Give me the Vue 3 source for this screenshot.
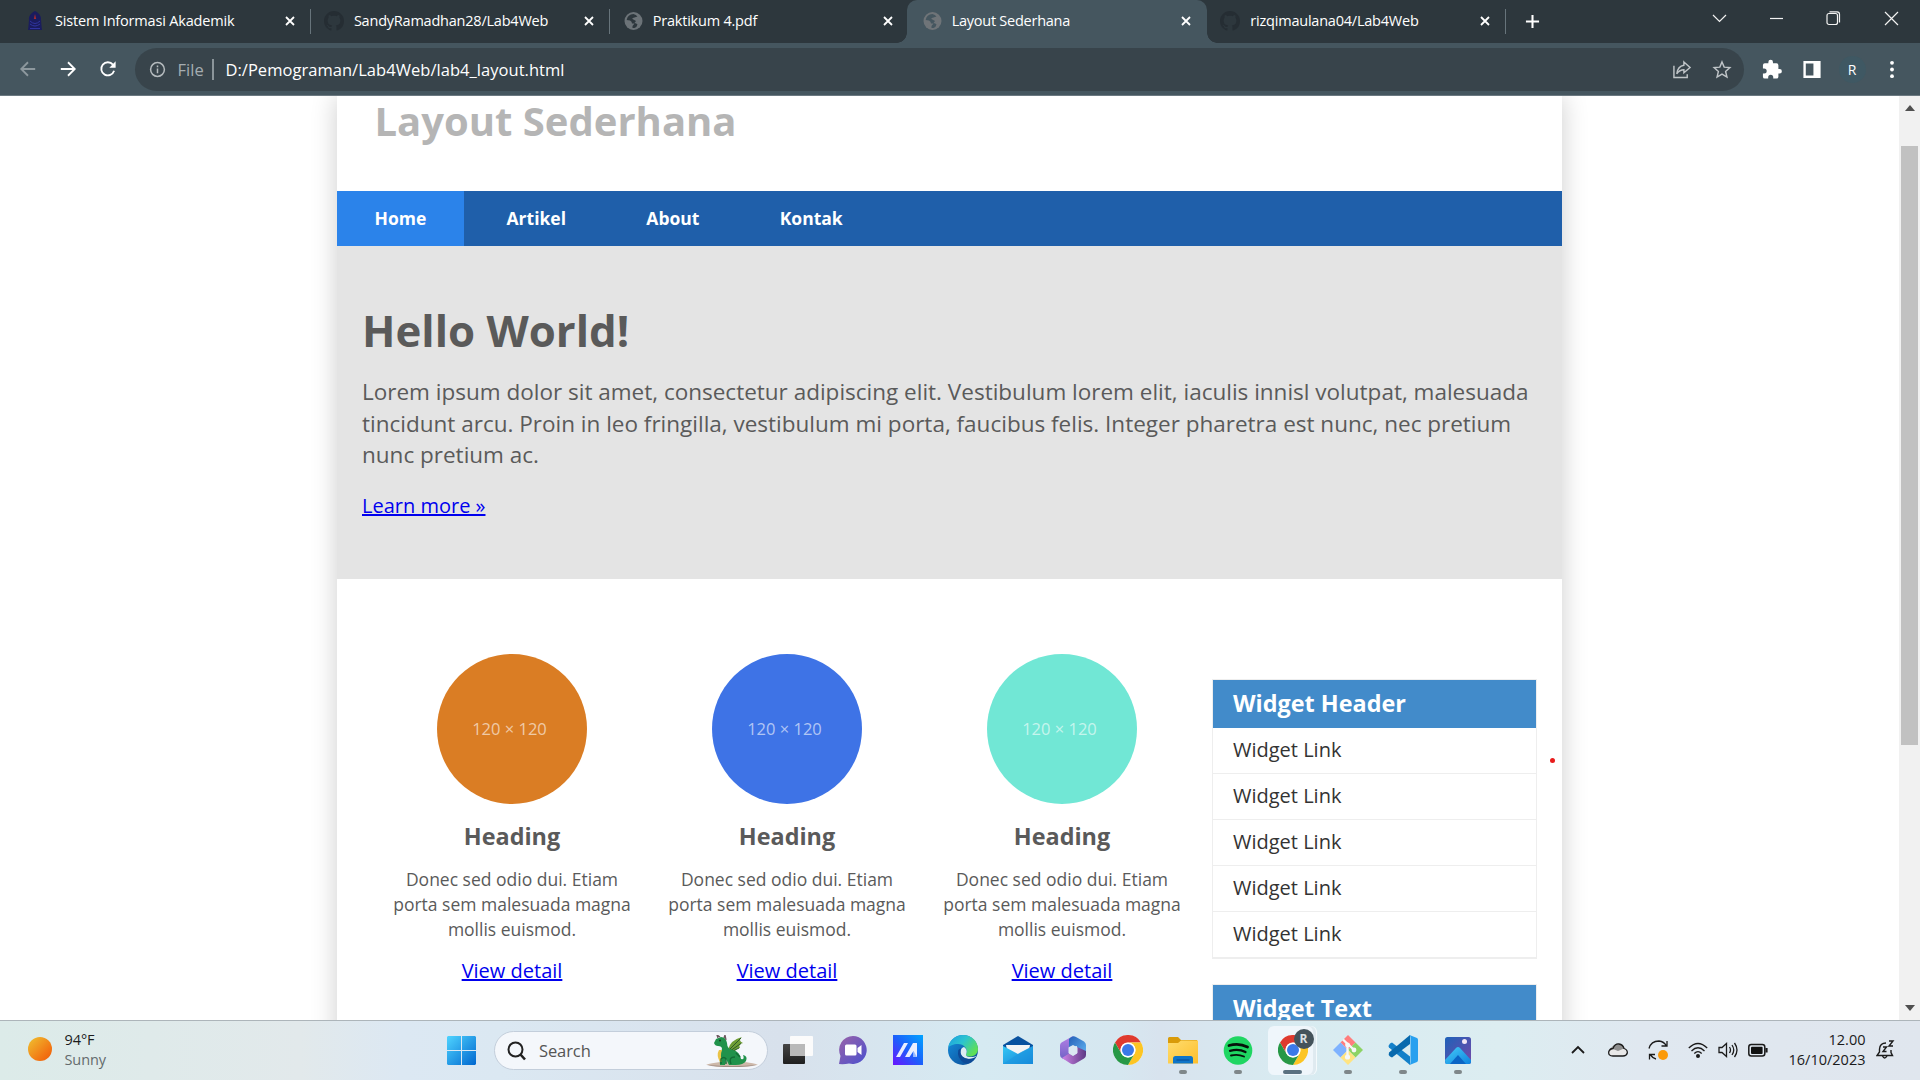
<script setup>
const tabs = [
  { title: 'Sistem Informasi Akademik', icon: 'crest', spacing: -0.18 },
  { title: 'SandyRamadhan28/Lab4Web', icon: 'github', spacing: -0.22 },
  { title: 'Praktikum 4.pdf', icon: 'globe', spacing: -0.22 },
  { title: 'Layout Sederhana', icon: 'globe', active: true, spacing: -0.25 },
  { title: 'rizqimaulana04/Lab4Web', icon: 'github', spacing: -0.22 },
]
const nav = ['Home', 'Artikel', 'About', 'Kontak']
const boxes = ['#da7d24', '#3e73e6', '#71e7d5']
const links = [1, 2, 3, 4, 5]
</script>

<template>
  <div class="desktop">
    <svg class="defs" width="0" height="0">
      <defs>
        <linearGradient id="win" x1="0" y1="0" x2="1" y2="1"><stop offset="0" stop-color="#4fd4ff" /><stop offset="1" stop-color="#0067cf" /></linearGradient>
        <linearGradient id="sun" x1="0" y1="0" x2="1" y2="1"><stop offset="0" stop-color="#efc331" /><stop offset=".7" stop-color="#f27513" /><stop offset="1" stop-color="#ee5a08" /></linearGradient>
        <linearGradient id="chat" x1="0" y1="0" x2="1" y2="1"><stop offset="0" stop-color="#9a62a8" /><stop offset="1" stop-color="#4a50cf" /></linearGradient>
        <linearGradient id="asus" x1="1" y1="0" x2="0" y2="1"><stop offset="0" stop-color="#00a4ff" /><stop offset=".5" stop-color="#1c60fb" /><stop offset="1" stop-color="#6a14ff" /></linearGradient>
        <linearGradient id="edgeTop" x1="0" y1="0" x2="1" y2=".6"><stop offset="0" stop-color="#1b9de2" /><stop offset=".5" stop-color="#2cc4cf" /><stop offset="1" stop-color="#5fdf55" /></linearGradient>
        <linearGradient id="edgeLow" x1="0" y1="0" x2="1" y2="1"><stop offset="0" stop-color="#1591df" /><stop offset="1" stop-color="#0b4590" /></linearGradient>
        <linearGradient id="mail" x1="0" y1="0" x2="1" y2="1"><stop offset="0" stop-color="#35c8f5" /><stop offset="1" stop-color="#1482d6" /></linearGradient>
        <linearGradient id="folder" x1="0" y1="0" x2="1" y2="1"><stop offset="0" stop-color="#ffdc6e" /><stop offset="1" stop-color="#fdbf2c" /></linearGradient>
        <linearGradient id="m1" x1="0" y1="0" x2="0" y2="1"><stop offset="0" stop-color="#b57fe6" /><stop offset="1" stop-color="#6b62c4" /></linearGradient>
        <linearGradient id="m2" x1="0" y1="0" x2="1" y2="1"><stop offset="0" stop-color="#2460b8" /><stop offset="1" stop-color="#62b5f3" /></linearGradient>
        <linearGradient id="m3" x1="0" y1="0" x2="1" y2="0"><stop offset="0" stop-color="#cd83e6" /><stop offset="1" stop-color="#5e3a85" /></linearGradient>
        <linearGradient id="photo" x1="0" y1="0" x2="1" y2="1"><stop offset="0" stop-color="#1e62b9" /><stop offset="1" stop-color="#7548a8" /></linearGradient>
        <linearGradient id="hill" x1="0" y1="0" x2="1" y2="1"><stop offset="0" stop-color="#46cdf7" /><stop offset="1" stop-color="#0d82df" /></linearGradient>
        <linearGradient id="dark" x1="0" y1="0" x2="0" y2="1"><stop offset="0" stop-color="#454545" /><stop offset="1" stop-color="#1f1f1f" /></linearGradient>
        <symbol id="chrome" viewBox="0 0 48 48">
          <circle cx="24" cy="24" r="24" fill="#fff" />
          <path d="M3.2 12A24 24 0 0 1 44.8 12H24A12 12 0 0 0 13.6 30Z" fill="#df3a2e" />
          <path d="M44.8 12A24 24 0 0 1 24 48L34.4 30A12 12 0 0 0 24 12Z" fill="#fcc524" />
          <path d="M24 48A24 24 0 0 1 3.2 12L13.6 30A12 12 0 0 0 34.4 30Z" fill="#279846" />
          <circle cx="24" cy="24" r="11.8" fill="#fff" /><circle cx="24" cy="24" r="9.6" fill="#3b79e8" />
        </symbol>
      </defs>
    </svg>

    <header class="tabstrip">
      <div v-for="(t, i) in tabs" :key="i" class="tab" :class="{ active: t.active, split: i < 2 || i === 4 }">
        <svg v-if="t.icon === 'crest'" class="fav" viewBox="0 0 20 20">
          <path d="M10 0C6 2 3.500 5 4 9L3.500 15L3 19H17L16.500 15L16 9C16.500 5 14 2 10 0Z" fill="#1a1c5e" />
          <path d="M10 3L8.800 8H11.200Z" fill="#a72a30" />
          <path d="M5 10Q10 15 15 10M5 13Q10 17 15 13M5 17.500H15" stroke="#3034a0" fill="none" />
        </svg>
        <svg v-else-if="t.icon === 'github'" class="fav" viewBox="0 0 16 16"><path fill="#252d33" d="M8 0C3.580 0 0 3.580 0 8c0 3.540 2.290 6.530 5.470 7.590.4.070.55-.17.55-.38 0-.19-.01-.82-.01-1.490-2.010.37-2.530-.49-2.690-.94-.09-.23-.48-.94-.82-1.130-.28-.15-.68-.52-.01-.53.63-.01 1.080.58 1.230.82.72 1.210 1.870.87 2.330.66.070-.52.28-.87.51-1.070-1.780-.2-3.640-.89-3.640-3.950 0-.87.31-1.590.82-2.150-.08-.2-.36-1.020.08-2.120 0 0 .67-.21 2.200.82.64-.18 1.320-.27 2-.27s1.360.09 2 .27c1.530-1.040 2.200-.82 2.200-.82.44 1.100.16 1.920.08 2.120.51.56.82 1.270.82 2.150 0 3.070-1.870 3.750-3.650 3.950.29.25.54.73.54 1.480 0 1.070-.01 1.930-.01 2.200 0 .21.15.46.55.38A8.010 8.010 0 0 0 16 8c0-4.420-3.580-8-8-8z" /></svg>
        <svg v-else class="fav" viewBox="0 0 20 20">
          <circle cx="10.500" cy="10" r="9" :fill="t.active ? '#6f7478' : '#6c7378'" />
          <path d="M10.500 3Q4.500 3.500 3.700 9L7 9.500Q9 10.500 9 12.500L11.500 12.500L9.500 15V17L11.500 17Q14 16 14.500 13.500Q13.500 12 11.500 12L13 10L9.500 8Q9 6.500 11.500 6.500L14.500 5.500Q13 3.500 10.500 3Z" :fill="t.active ? '#45565f' : '#2d373d'" />
        </svg>
        <span class="title" :style="{ letterSpacing: t.spacing + 'px' }">{{ t.title }}</span>
        <svg class="close" viewBox="0 0 10 10"><path d="M1 1L9 9M9 1L1 9" stroke="#fff" stroke-width="1.800" /></svg>
      </div>
      <svg class="plus" viewBox="0 0 16 16"><path d="M8 1V15M1 8H15" stroke="#fff" stroke-width="2.200" /></svg>
      <div class="winbtns">
        <svg viewBox="0 0 16 16"><path d="M1.500 5L8 11.500L14.500 5" /></svg>
        <svg viewBox="0 0 16 16"><path d="M1.500 8.500H14.500" /></svg>
        <svg viewBox="0 0 16 16"><rect x="1.500" y="3.500" width="10.500" height="11" rx="2" /><path d="M4 1.800H11.500Q14 1.800 14 4.300V12.500" /></svg>
        <svg viewBox="0 0 16 16"><path d="M1.500 2L14.500 15M14.500 2L1.500 15" /></svg>
      </div>
    </header>

    <div class="toolbar">
      <div class="navbtns">
        <svg viewBox="0 0 20 20" class="dim"><path d="M18 10H3M10 2.500L2.500 10L10 17.500" /></svg>
        <svg viewBox="0 0 20 20"><path d="M2 10H17M10 2.500L17.500 10L10 17.500" /></svg>
        <svg viewBox="0 0 20 20"><path d="M16.800 12A7.300 7.300 0 1 1 15.500 5.200" /><path d="M18.500 1.500V8.500H11.500Z" fill="#fff" stroke="none" /></svg>
      </div>
      <div class="omnibox">
        <svg class="info" viewBox="0 0 18 18"><circle cx="9" cy="9" r="7.300" /><path d="M9 8V13M9 4.800V6.500" /></svg>
        <span class="file">File</span><i class="bar"></i>
        <span class="url">D:/Pemograman/Lab4Web/lab4_layout.html</span>
        <svg class="act" viewBox="0 0 20 20"><path d="M1.500 6V18.500H15.500V15" /><path d="M12 2L18.500 8L12 13.500V10.300Q7.500 10.300 4.500 14.500Q5.500 6.500 12 5.500Z" /></svg>
        <svg class="act" viewBox="0 0 20 20"><path d="M10 2L12.300 7.500L18.300 8L13.800 12L15.200 18L10 14.800L4.800 18L6.200 12L1.700 8L7.700 7.500Z" /></svg>
      </div>
      <div class="tools">
        <svg viewBox="0 0 22 22"><path fill="#fff" d="M19 10.500H17.700V6.500A2 2 0 0 0 15.700 4.500H12V3.200A2.400 2.400 0 0 0 7.200 3.200V4.500H3.500A2 2 0 0 0 1.500 6.500V10H2.800A2.600 2.600 0 0 1 2.800 15.300H1.500V18.500A2 2 0 0 0 3.500 20.500H7V19.200A2.600 2.600 0 0 1 12.300 19.200V20.500H15.700A2 2 0 0 0 17.700 18.500V15.200H19A2.300 2.300 0 0 0 19 10.500Z" /></svg>
        <svg viewBox="0 0 22 22"><path fill="#fff" fill-rule="evenodd" d="M2 2H20V20H2ZM4.500 4.800V17.200H12.500V4.800Z" /></svg>
        <b class="avatar">R</b>
        <svg viewBox="0 0 22 22" fill="#fff"><circle cx="11" cy="4" r="2" /><circle cx="11" cy="11" r="2" /><circle cx="11" cy="18" r="2" /></svg>
      </div>
    </div>

    <main class="viewport">
      <div class="container">
        <h1 class="site">Layout Sederhana</h1>
        <nav><a v-for="(n, i) in nav" :key="n" :class="{ on: i === 0 }">{{ n }}</a></nav>
        <section class="hero">
          <h2>Hello World!</h2>
          <p>Lorem ipsum dolor sit amet, consectetur adipiscing elit. Vestibulum lorem elit, iaculis innisl volutpat, malesuada<br>tincidunt arcu. Proin in leo fringilla, vestibulum mi porta, faucibus felis. Integer pharetra est nunc, nec pretium<br>nunc pretium ac.</p>
          <a class="link">Learn more »</a>
        </section>
        <div class="wrapper">
          <div class="boxes">
            <article v-for="c in boxes" :key="c">
              <div class="disc" :style="{ background: c }"><span>120 × 120</span></div>
              <h3>Heading</h3>
              <p>Donec sed odio dui. Etiam<br>porta sem malesuada magna<br>mollis euismod.</p>
              <a class="link">View detail</a>
            </article>
          </div>
          <aside>
            <div class="widget">
              <h3>Widget Header</h3>
              <a v-for="l in links" :key="l">Widget Link</a>
            </div>
            <div class="widget"><h3>Widget Text</h3></div>
            <i class="dot"></i>
          </aside>
        </div>
      </div>
      <div class="scrollbar">
        <svg class="up" viewBox="0 0 10 6"><path d="M5 0L10 6H0Z" fill="#505050" /></svg>
        <div class="thumb"></div>
        <svg class="down" viewBox="0 0 10 6"><path d="M0 0H10L5 6Z" fill="#505050" /></svg>
      </div>
    </main>

    <footer class="taskbar">
      <div class="weather">
        <svg viewBox="0 0 24 24"><circle cx="12" cy="12" r="12" fill="url(#sun)" /></svg>
        <div><span>94°F</span><em>Sunny</em></div>
      </div>
      <svg class="start" viewBox="0 0 29 29" fill="url(#win)"><path d="M1 0H14V14H0V1ZM15 0H28L29 1V14H15ZM0 15H14V29H1L0 28ZM15 15H29V28L28 29H15Z" /></svg>
      <div class="search">
        <svg class="glass" viewBox="0 0 20 20"><circle cx="8.500" cy="8.500" r="7" /><path d="M13.500 13.500L18 18.500" stroke-width="2.600" /></svg>
        <span>Search</span>
        <svg class="dragon" viewBox="0 0 52 32">
          <path d="M0 29.500Q12 26.500 26 26.500Q42 26.500 52 29.500Q44 32 26 32Q8 32 0 29.500Z" fill="#cdb8a9" /><path d="M1 30Q26 32 51 30Q42 32 26 32Q8 32 1 30Z" fill="#a08b80" />
          <path d="M22 15Q24 5 36 2Q31.500 5.500 37 8Q32 9 34 13Q30 13 28 18Z" fill="#6f9d35" /><path d="M23 15L35 3M24 16L35 8.500M25 17L33 13" stroke="#2c5a29" stroke-width="1" />
          <path d="M12 11Q16 11 16 14Q13 20 14 30H19L20 24L23 30H28Q37 30.500 40 26Q42 21 37 20Q39 25 35 24Q34 17 27 15Q21 14 21 8Q20 2 15 2L10 4L8 8Q9 11 12 11Z" fill="#20924b" />
          <path d="M13 15Q10 20 14 27H16Q14 20 16 15Z" fill="#eac347" /><path d="M12 3L11 0L14 2M18 3L19 0L20 5" stroke="#6d5960" stroke-width="1.300" fill="none" />
          <path d="M15 29V24Q18 21 20 24V29M25 29Q22 22 29 22M30 18L34 22" stroke="#126c35" stroke-width="1.400" fill="none" /><circle cx="14" cy="5.500" r="1" fill="#163c20" />
        </svg>
      </div>
      <div class="apps">
        <div class="app"><svg viewBox="0 0 30 30"><rect x="0" y="9" width="22" height="20" rx="1" fill="url(#dark)" /><rect x="7" y="1" width="23" height="20" rx="1" fill="#fbfbfb" /><path d="M7 9H22V21H7Z" fill="#b9b9b9" /></svg></div>
        <div class="app"><svg viewBox="0 0 30 30"><path d="M15 1A14 14 0 1 1 11 28.500Q6 29.500 1 29L2.500 21A14 14 0 0 1 15 1Z" fill="url(#chat)" /><rect x="7" y="9.500" width="11.500" height="11" rx="1.500" fill="#fff" /><path d="M19.500 13L23.500 10V20L19.500 17Z" fill="#fff" /></svg></div>
        <div class="app"><svg viewBox="0 0 30 30"><rect width="30" height="30" fill="url(#asus)" /><path d="M11 8H15L7 22H3ZM20 8H24V22H20.500V16L16.500 22H12Z" fill="#e9eeff" /><path d="M20.500 16L24 22H20.500Z" fill="#9bbcff" /></svg></div>
        <div class="app"><svg viewBox="0 0 30 30"><circle cx="15" cy="15" r="15" fill="url(#edgeLow)" /><path d="M.3 12.500C1 5 8 0 15 0C24 0 30 6.500 30 14C30 19 26 21.500 22 21.500C19 21.500 17 20.500 18.500 18C20 14 16 9 10 9C5 9 1.500 11 .3 12.500Z" fill="url(#edgeTop)" /><path d="M18.500 18C17 20.500 19 22 22.500 22C25 22 27.500 21.500 28.500 20.500Q27 24 22 24C15 24 11.500 20 12.500 16Q13.500 12.500 16 12Q19.500 14.500 18.500 18Z" fill="#ddebf2" /><path d="M10.300 15Q8.500 23 16 28Q23 30 28 22Q19 26 14.500 21.500Q11.500 18 13 13Z" fill="#0e4a97" /></svg></div>
        <div class="app"><svg viewBox="0 0 30 30"><path d="M0 10L15 1L30 10V15H0Z" fill="#0a529f" /><path d="M3 10H27L25 20H5Z" fill="#f5f5f5" /><path d="M0 11L15 19L30 11V29H0Z" fill="url(#mail)" /><path d="M0 29L18 17L30 11V29Z" fill="#1a93df" opacity=".5" /></svg></div>
        <div class="app"><svg viewBox="0 0 30 30"><path d="M15 1L3.500 7.500Q2 8.500 2 10.500V20Q2 22.500 4.500 23.500L11 26V11L18 7Z" fill="url(#m1)" /><path d="M12 3Q15 .3 18 2L26 6.500Q28 8 28 10V20L19 17V11L11 12V4Z" fill="url(#m2)" /><path d="M4 23L11 18.500L15 21L19 18.500V12L28 16V20Q28 22.500 26 23.500L17.500 28.500Q15 30 12.500 28.500Z" fill="url(#m3)" /><path d="M15 10L19.500 12.500V18L15 20.500L10.500 18V12.500Z" fill="#dbe9f2" /></svg></div>
        <div class="app"><svg viewBox="0 0 30 30"><use href="#chrome" width="30" height="30" /></svg></div>
        <div class="app"><svg viewBox="0 0 30 30"><path d="M0 3.500Q0 2 1.500 2H10L13 5H29V12H0Z" fill="#d99b0a" /><path d="M0 8H10L13 5.500H30V28.500H0Z" fill="url(#folder)" /><path d="M5 28.500V23.500Q5 21 7.500 21H22.500Q25 21 25 23.500V28.500Z" fill="#0f75c8" /><path d="M8.500 25H21.500" stroke="#07509a" stroke-width="1.200" /></svg><i></i></div>
        <div class="app"><svg viewBox="0 0 30 30"><circle cx="15" cy="15.500" r="14.300" fill="#1fd662" /><path d="M6 10.500Q16 7.500 24.500 12" stroke="#06120a" stroke-width="2.800" fill="none" stroke-linecap="round" /><path d="M7 15.800Q15.500 13.300 22.500 17" stroke="#06120a" stroke-width="2.300" fill="none" stroke-linecap="round" /><path d="M8 20.500Q15 18.800 21 21.500" stroke="#06120a" stroke-width="1.900" fill="none" stroke-linecap="round" /></svg><i></i></div>
        <div class="app current"><svg viewBox="0 0 30 30"><use href="#chrome" width="30" height="30" /></svg><b>R</b><i></i></div>
        <div class="app"><svg viewBox="0 0 30 30"><path d="M15 0L22.500 7.500L15 15L7.500 7.500Z" fill="#ff7d7d" /><path d="M7.500 7.500L15 15L7.500 22.500L0 15Z" fill="#7eb2ff" /><path d="M22.500 7.500L30 15L22.500 22.500L15 15Z" fill="#8cd365" /><path d="M15 15L22.500 22.500L15 30L7.500 22.500Z" fill="#ffe482" /><path d="M10 4.500L14.500 9V22M15 9L21 15" stroke="#f5f8f8" stroke-width="2.300" fill="none" /><circle cx="14.500" cy="10" r="2.400" fill="#f5f8f8" /><circle cx="21" cy="15" r="2.400" fill="#f5f8f8" /><circle cx="14.500" cy="22" r="2.600" fill="#f5f8f8" /></svg><i></i></div>
        <div class="app"><svg viewBox="0 0 30 30"><path d="M2 8.500L4 7.500L22 21.500V30L1 12.500Q0 10.500 2 8.500Z" fill="#1480c9" /><path d="M2 21.500L4 22.500L22 9V0L1 17.500Q0 19.500 2 21.500Z" fill="#0869ad" /><path d="M21.500 0L29 3Q30 3.500 30 5V25Q30 26.500 29 27L21.500 30Q22.500 29 22.500 27V3Q22.500 1 21.500 0Z" fill="#27a0ef" /></svg><i></i></div>
        <div class="app"><svg viewBox="0 0 30 30"><rect x="2" y="2" width="26" height="27" rx="2.500" fill="url(#photo)" /><path d="M13 13Q15 11 17 13L28 25V27Q28 29 26 29H3Q2 28 2 25Z" fill="url(#hill)" /><path d="M15 20L23 29H7Z" fill="#0b65c5" /><circle cx="21.500" cy="6.500" r="2.500" fill="#f2e7f5" /></svg><i></i></div>
      </div>
      <div class="tray">
        <svg viewBox="0 0 20 20"><path d="M4 13L10 7L16 13" stroke-width="1.800" /></svg>
        <svg viewBox="0 0 20 20"><path d="M5 16Q0 16 .8 11.500Q2 8.500 5 8.500Q7 3.500 11 4Q15 4.500 16 8.500Q19.500 9.500 19.300 13Q18.500 16 15 16Z" fill="#e9e9e9" stroke="none" /><path d="M2 9Q7 3 11 4Q15 4.500 16 8.500L10 11L5 9Z" fill="#8e8e8e" stroke="none" /><path d="M5 16Q0 16 .8 11.500Q2 8.500 5 8.500Q7 3.500 11 4Q15 4.500 16 8.500Q19.500 9.500 19.300 13Q18.500 16 15 16Z" /></svg>
        <svg viewBox="0 0 20 20"><path d="M1 8.500Q3 1 11 1Q16 1.500 18.500 6M19 1V6H13.500M8 19Q5 18.500 2.500 15M1.500 19.500V14.500H7" /><circle cx="15" cy="15" r="5" fill="#fb9a0a" stroke="none" /></svg>
        <svg viewBox="0 0 20 20"><path d="M.8 8Q10 -1 19.200 8M3.500 11Q10 4.500 16.500 11M6.300 13.500Q10 9.800 13.700 13.500" /><circle cx="10" cy="16" r="2" fill="#1b1b1b" stroke="none" /></svg>
        <svg viewBox="0 0 20 20"><path d="M1 7.500H4L8.500 3.500V16.500L4 12.500H1ZM11.500 7Q13.500 10 11.500 13M14 5Q17.500 10 14 15M16.500 3Q21.500 10 16.500 17" /></svg>
        <svg viewBox="0 0 20 20"><rect x=".8" y="4.500" width="16" height="11.500" rx="2.500" stroke-width="1.500" /><rect x="3" y="6.700" width="11.600" height="7.200" rx="1" fill="#111" stroke="none" /><path d="M18.500 8V12.500" stroke-width="2.200" /></svg>
      </div>
      <div class="clock"><span>12.00</span><span>16/10/2023</span></div>
      <svg class="bell" viewBox="0 0 20 20"><path d="M10 3Q4 3 3.500 9V12L1 15.500H16.500L15 12.500V10M6.500 16Q8.500 20 11 16M7 7H10.500L7 11.500H10.500M13 1H17L13 6H17" /></svg>
    </footer>
  </div>
</template>

<style>
body { margin: 0; overflow: hidden; }
</style>

<style scoped>
* { box-sizing: border-box; }
.desktop { width: 1920px; height: 1080px; display: flex; flex-direction: column; overflow: hidden; font-family: "Open Sans", "Noto Sans", sans-serif; background: #fff; }
.defs { position: absolute; }
svg { display: block; flex: none; }

.tabstrip { height: 43px; background: #2d373d; display: flex; padding-left: 11px; color: #fff; flex: none; }
.tab { width: 298.900px; height: 43px; display: flex; align-items: center; padding: 0 15px 1px 14px; position: relative; flex: none; font-size: 14.500px; }
.tab.split::after { content: ""; position: absolute; right: -1px; top: 9px; height: 25px; width: 1px; background: #67747b; }
.tab.active { background: #45565f; border-radius: 10px 10px 0 0; margin: 0 -1px 0 -1px; padding-left: 15px; width: 300.700px; padding-right: 16px; }
.tab.active::before, .tab.active::after { content: ""; position: absolute; bottom: 0; width: 10px; height: 10px; }
.tab.active::before { left: -10px; background: radial-gradient(circle at 0 0, transparent 9.500px, #45565f 10px); }
.tab.active::after { right: -10px; background: radial-gradient(circle at 100% 0, transparent 9.500px, #45565f 10px); }
.fav { width: 20px; height: 20px; }
.title { margin-left: 10px; white-space: nowrap; line-height: 20px; }
.close { width: 10px; height: 10px; margin-left: auto; }
.plus { width: 15px; height: 15px; margin: 14px 0 0 20px; }
.winbtns { display: flex; margin-left: auto; }
.winbtns svg { width: 57px; height: 16px; margin-top: 10px; fill: none; stroke: #f2f2f2; stroke-width: 1.200; position: relative; left: -1px; }
.winbtns svg:last-child { left: 0; }

.toolbar { height: 53px; background: #45565f; border-bottom: 1px solid #6b7981; display: flex; padding: 5px 8px 4px; flex: none; }
.navbtns { display: flex; width: 127px; }
.navbtns svg { width: 40px; height: 18px; margin-top: 12px; fill: none; stroke: #fff; stroke-width: 2; }
.navbtns .dim { stroke: #8d989e; }
.omnibox { width: 1610px; height: 43px; border-radius: 22px; background: #38444b; display: flex; align-items: center; padding: 0 2px 0 14px; color: #fff; font-size: 16.500px; }
.info { width: 17px; height: 17px; fill: none; stroke: #b5bbbe; stroke-width: 1.600; }
.file { color: #a5adb1; margin-left: 11.500px; width: 28px; letter-spacing: .1px; }
.bar { width: 1.500px; height: 21px; background: #8b959a; margin: 0 11.500px 0 7px; }
.url { letter-spacing: .04px; white-space: nowrap; margin-right: auto; }
.act { width: 40px; height: 19px; fill: none; stroke: #c0c5c8; stroke-width: 1.500; }
.tools { display: flex; align-items: center; margin-left: 8px; }
.tools svg { width: 40px; height: 21px; }
.avatar { width: 27px; height: 27px; margin: 0 6.500px; border-radius: 50%; background: #3f5863; color: #fff; font-size: 14px; font-weight: 500; line-height: 27px; text-align: center; }

.viewport { height: 924px; display: flex; overflow: hidden; flex: none; padding-left: 337px; color: #5a5a5a; }
.container { width: 1225px; height: 1100px; box-shadow: 0 0 25px rgba(0, 0, 0, .2); background: #fff; flex: none; }
h1, h2, h3, p { margin: 0; }
.site { height: 95px; padding-left: 37.500px; font-size: 40px; line-height: 50px; color: #b5b5b5; }
nav { height: 55px; background: #1f5faa; display: flex; gap: 5.300px; }
nav a { padding: 0 37.500px; line-height: 55px; font-size: 17.500px; font-weight: 700; color: #fff; }
nav a.on { background: #2b83ea; }
.hero { height: 333px; background: #e4e4e4; padding: 54px 25px 0; }
.hero h2 { font-size: 43.750px; line-height: 60px; margin-bottom: 16px; }
.hero p { font-size: 22.500px; line-height: 31.500px; white-space: nowrap; }
.link { color: #0000ee; text-decoration: underline; font-size: 20px; line-height: 28px; }
.hero .link { display: block; width: max-content; margin-top: 21px; }
.wrapper { display: flex; padding-left: 37.500px; }
.boxes { display: flex; padding-top: 75px; }
.boxes article { width: 275px; display: flex; flex-direction: column; align-items: center; text-align: center; }
.disc { width: 150px; height: 150px; border-radius: 50%; display: flex; align-items: center; justify-content: center; color: rgba(255, 255, 255, .6); font-size: 16.500px; padding: 0 5px 2px 0; white-space: nowrap; }
.boxes h3 { font-size: 23.400px; line-height: 32px; margin-top: 16px; }
.boxes p { font-size: 17.500px; line-height: 25px; margin: 15px 0 15px; white-space: nowrap; }
aside { width: 325px; margin-left: 12.500px; padding-top: 100px; position: relative; }
.widget { border: 1px solid #eee; margin-bottom: 25px; }
.widget h3 { background: #428bca; color: #fff; height: 48px; line-height: 47px; padding-left: 20px; font-size: 23.400px; }
.widget a { display: block; height: 46px; line-height: 44px; padding-left: 20px; border-bottom: 1px solid #eee; font-size: 20px; color: #333; }
.dot { position: absolute; left: 338px; top: 179px; width: 5px; height: 5px; border-radius: 50%; background: #e81c1c; }
.scrollbar { margin-left: auto; width: 21px; height: 924px; background: #f1f1f1; display: flex; flex-direction: column; align-items: center; z-index: 1; }
.scrollbar svg { width: 10px; height: 6px; }
.up { margin-top: 9px; }
.thumb { width: 17px; height: 599px; margin-top: 35px; background: #c1c1c1; }
.down { margin: auto 0 9px; }

.taskbar { height: 60px; border-top: 1px solid #adb5ba; display: flex; align-items: center; flex: none; background: linear-gradient(90deg, #dcebe9 0, #e2e9eb 300px, #dce8f3 400px, #dbe8f2 500px, #d8e1ec 780px, #d6eaf2 980px, #d6e7f0 1120px, #d8e3ee 1160px, #d8ebf1 1290px, #dcedf1 1500px, #e0e8f0 1640px, #e0e6ee 1920px); color: #1b1b1b; }
.weather { width: 419px; padding-left: 28px; display: flex; font-size: 14.500px; align-items: center; flex: none; }
.weather > svg { width: 24px; height: 24px; margin-right: 12.500px; margin-top: -3px; }
.weather span, .weather em { display: block; line-height: 20px; font-style: normal; letter-spacing: -.1px; }
.weather em { color: #646b6d; }
.weather > div { margin-top: -2px; }
.start { width: 29px; height: 29px; margin-left: 28px; }
.search { width: 274px; height: 39px; margin-left: 18px; border-radius: 20px; background: #f4f7fb; border: 1px solid #c3cedb; display: flex; align-items: center; padding: 0 9px 0 12px; flex: none; color: #555; font-size: 16.500px; }
.glass { width: 20px; height: 20px; fill: none; stroke: #222; stroke-width: 2; }
.search span { margin-left: 12px; letter-spacing: -.1px; }
.dragon { width: 52px; height: 32px; margin-left: auto; }
.apps { display: flex; margin-left: 2.500px; }
.app { width: 55px; height: 59px; position: relative; padding: 14px 12.500px; }
.app svg { width: 30px; height: 30px; position: relative; }
.app i { position: absolute; left: 23.500px; top: 49px; width: 8px; height: 4px; border-radius: 2px; background: #7f878a; }
.current::before { content: ""; position: absolute; left: 2.500px; top: 5px; width: 45px; height: 49px; border-radius: 6px; background: #eff6fb; box-shadow: 3px 0 0 #dfeaf0, 4px 0 0 #f4fafc; }
.current i { left: 17.500px; width: 19px; background: #5a7180; }
.current b { position: absolute; left: 28px; top: 8px; width: 20px; height: 20px; border-radius: 50%; background: #44535b; color: #d9e0e4; font-size: 12px; line-height: 20px; text-align: center; }
.tray { display: flex; margin-left: 82px; flex: none; margin-top: -1px; }
.tray svg { width: 20px; height: 20px; fill: none; stroke: #1b1b1b; stroke-width: 1.300; }
.tray svg:nth-child(2), .tray svg:nth-child(3), .tray svg:nth-child(4) { margin-left: 20px; }
.tray svg:nth-child(5), .tray svg:nth-child(6) { margin-left: 10px; }
.clock { width: 98px; text-align: right; font-size: 14.500px; line-height: 20px; flex: none; margin-top: -2px; }
.clock span { display: block; }
.bell { width: 20px; height: 20px; margin-left: 10px; margin-top: -1px; fill: none; stroke: #1b1b1b; stroke-width: 1.400; }
</style>
